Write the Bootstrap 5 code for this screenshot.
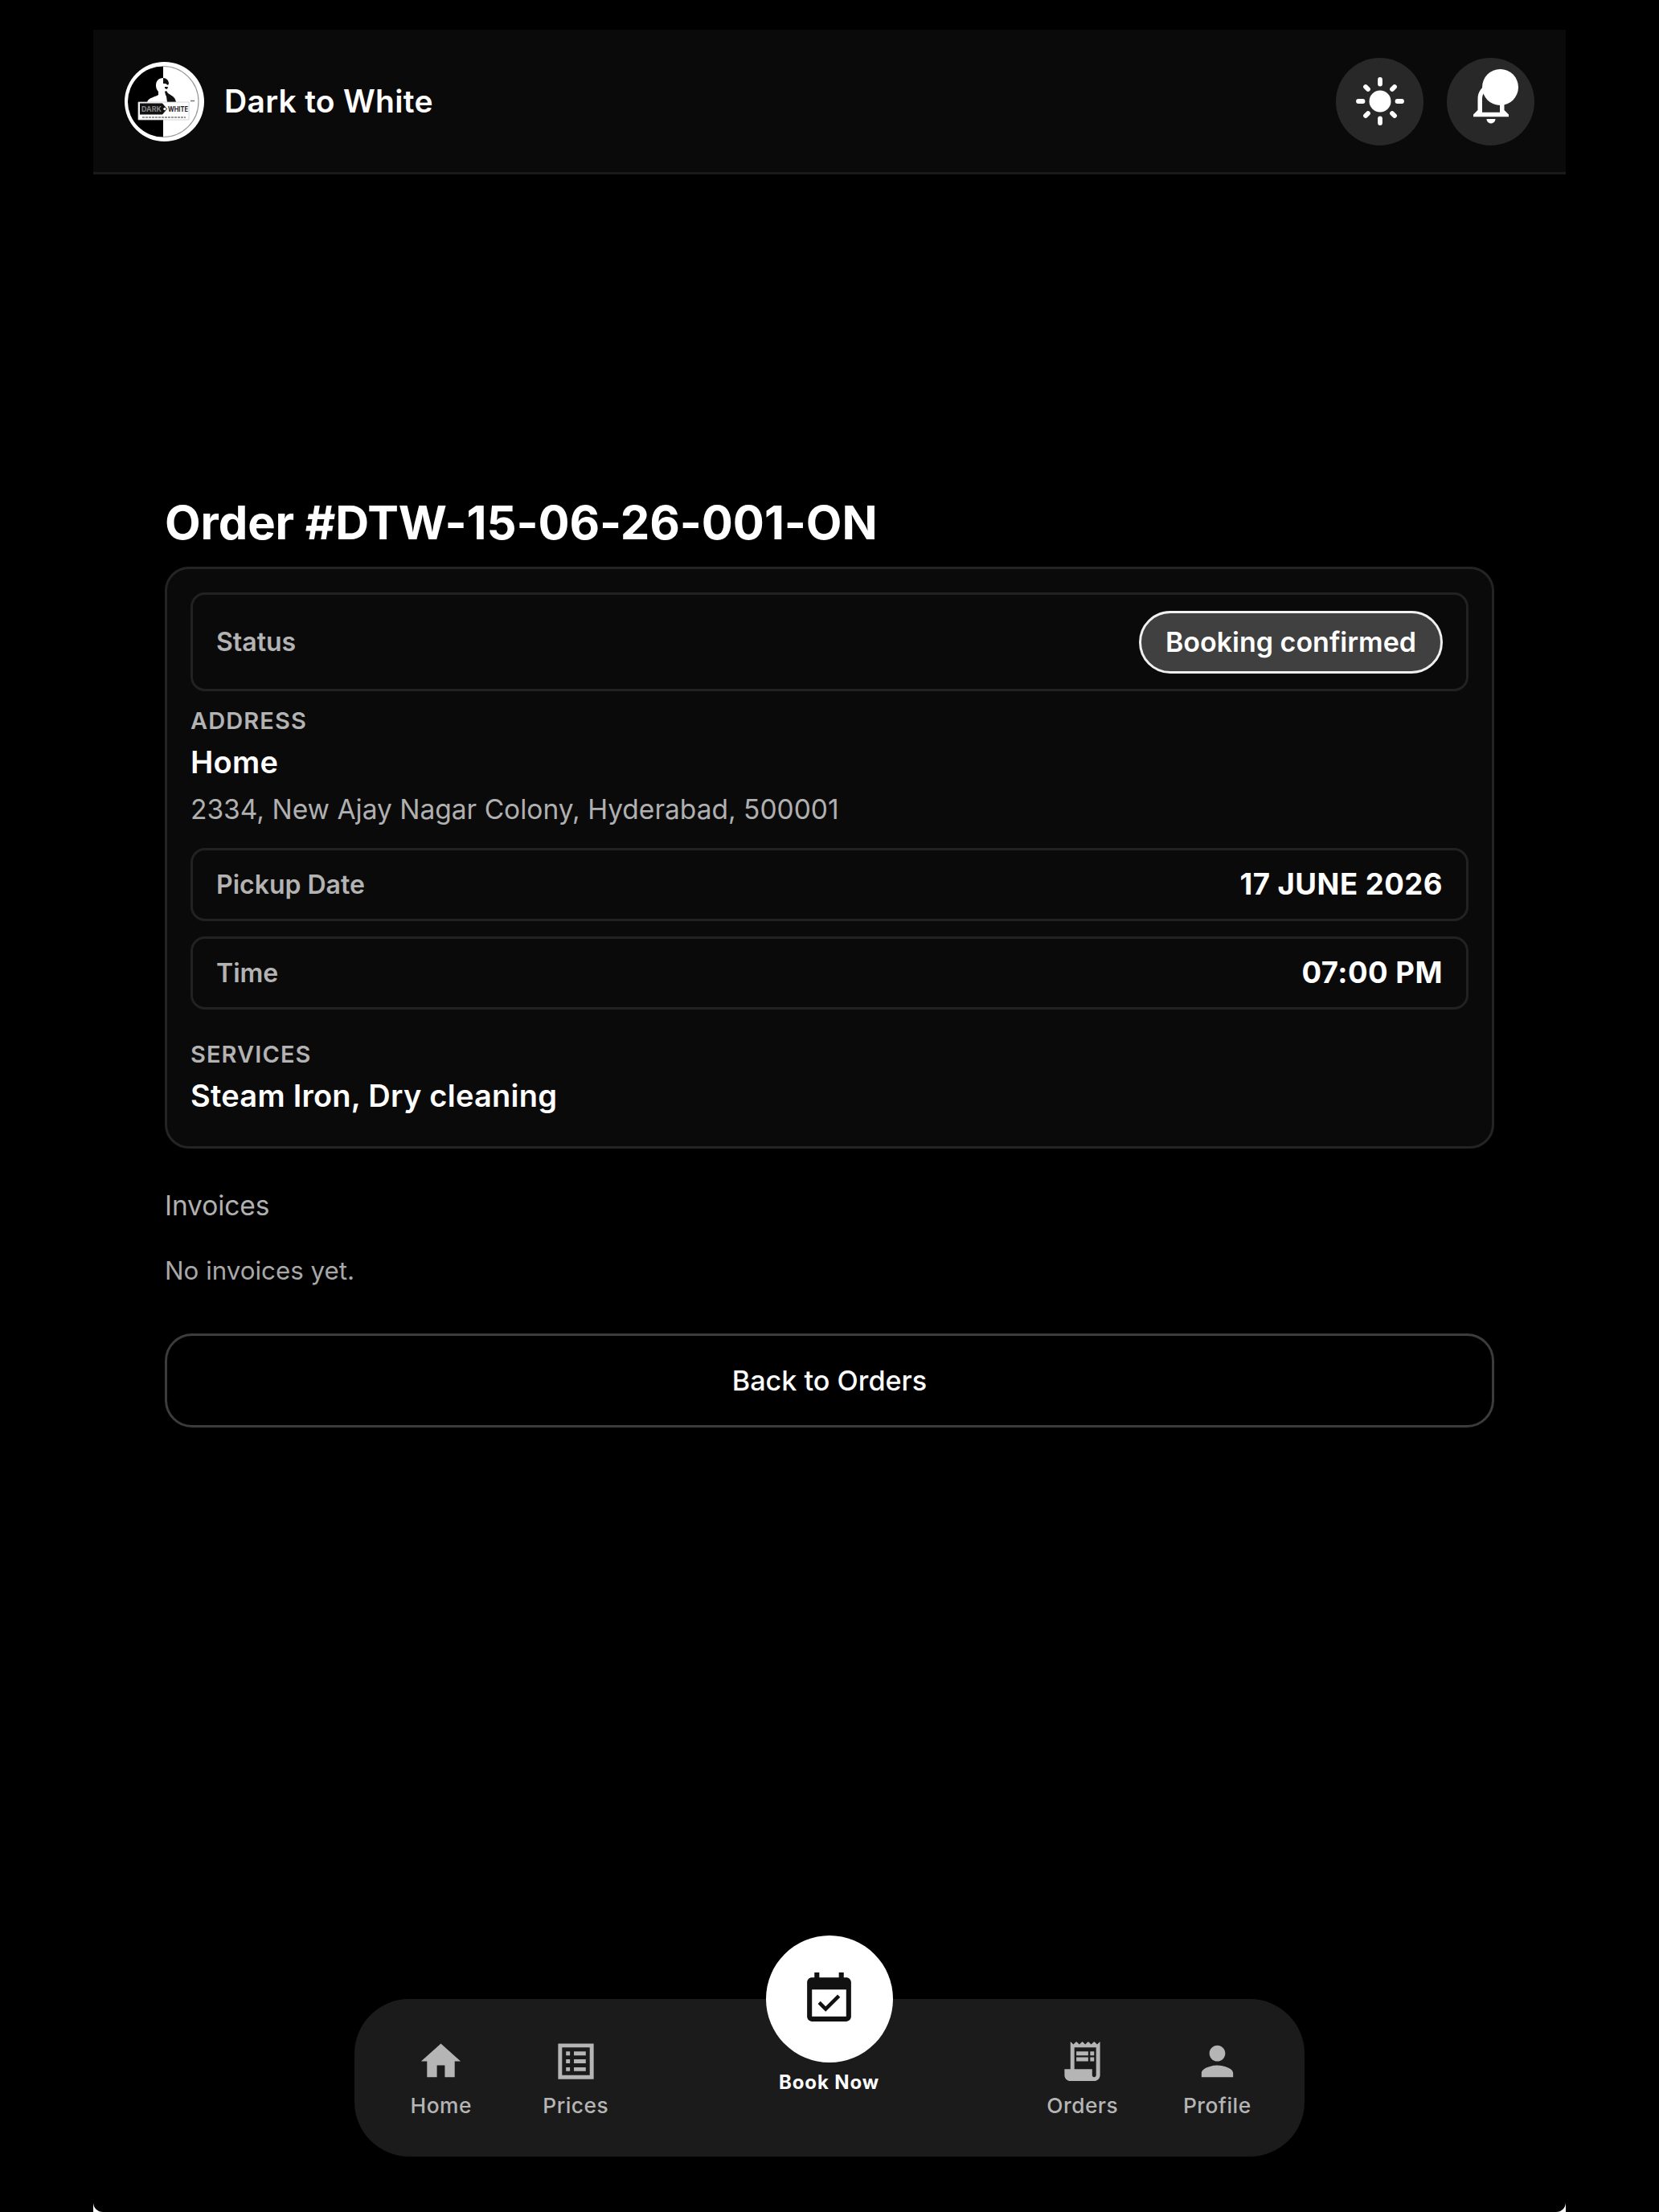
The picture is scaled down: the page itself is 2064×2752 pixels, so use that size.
<!DOCTYPE html>
<html lang="en">
<head>
  <meta charset="UTF-8">
  <meta name="viewport" content="width=device-width, initial-scale=1.0">
  <title>Dark to White - Order</title>
  <link href="https://cdn.jsdelivr.net/npm/bootstrap@5.3.0/dist/css/bootstrap.min.css" rel="stylesheet">
  <style>
    body {
      background-color: #000;
      color: #fff;
      font-family: Inter, 'Liberation Sans', sans-serif;
      padding-top: 37px;
    }
    .app-edge {
      width: 1832px;
      height: 2715px;
      background: #fff;
    }
    .app-shell {
      background: #000;
      border-radius: 0 0 12px 12px;
    }
    .top-bar {
      height: 180px;
      padding: 1px 39px 0;
      background: #0a0a0a;
      border-bottom: 3px solid #1a1a1a;
    }
    .brand-name {
      font-size: 39px;
      font-weight: 600;
      letter-spacing: .3px;
      margin-left: 25px;
    }
    .round-btn {
      width: 109px;
      height: 109px;
      background: #282828;
      border: 0;
    }
    .alert-dot {
      width: 45px;
      height: 45px;
      top: 14px;
      left: 44px;
    }
    .order-page {
      padding: 398px 89px 0;
    }
    .order-title {
      font-size: 58px;
      font-weight: 700;
      line-height: 70px;
      letter-spacing: -.1px;
      margin-bottom: 20px;
    }
    .order-card {
      background: #0a0a0a;
      border: 3px solid #242424;
      border-radius: 30px;
      height: 724px;
      padding: 29px;
    }
    .info-row {
      border: 3px solid #222;
      border-radius: 18px;
      height: 91px;
      padding: 0 29px;
    }
    .info-row.status-row {
      height: 123px;
    }
    .info-label {
      font-size: 32px;
      font-weight: 600;
      color: #b3b3b3;
    }
    .info-value {
      font-size: 36.5px;
      font-weight: 700;
      letter-spacing: .5px;
    }
    .status-pill {
      height: 78px;
      padding: 0 30px;
      font-size: 34px;
      font-weight: 600;
      background: #404040;
      border: 3px solid #f0f0f0;
    }
    .section-label {
      font-size: 29px;
      font-weight: 600;
      line-height: 40px;
      letter-spacing: 1.1px;
      color: #b3b3b3;
    }
    .section-value {
      font-size: 38px;
      font-weight: 600;
      line-height: 48px;
      letter-spacing: .25px;
      margin-top: 7px;
    }
    .address-line {
      font-size: 33.5px;
      line-height: 44px;
      margin: 13px 0 26px;
      color: #b0b0b0;
    }
    .invoices-title {
      font-size: 33.5px;
      font-weight: 400;
      line-height: 44px;
      letter-spacing: -.1px;
      margin: 49px 0 39px;
      color: #b0b0b0;
    }
    .invoices-empty {
      font-size: 31.3px;
      line-height: 40px;
      margin-bottom: 58px;
      color: #a8a8a8;
    }
    .back-btn {
      height: 117px;
      border: 3px solid #3c3c3c;
      border-radius: 34px;
      color: #fff;
      font-size: 34.2px;
      font-weight: 500;
    }
    .bottom-bar {
      width: 1182px;
      height: 196px;
      margin: auto auto 69px;
      padding: 0 25px 0 24px;
      background: #1b1b1b;
      border-radius: 68px;
    }
    .tab-item {
      width: 167.5px;
      padding-top: 48px;
      color: #b5b5b5;
      font-size: 26.3px;
      font-weight: 500;
      line-height: 32px;
      letter-spacing: .5px;
    }
    .tab-item svg {
      margin-bottom: 10px;
    }
    .book-item {
      margin-top: -79px;
      color: #fff;
      font-size: 24px;
      font-weight: 700;
      line-height: 30px;
      letter-spacing: .9px;
    }
    .book-circle {
      width: 158px;
      height: 158px;
      margin-bottom: 10px;
      color: #111;
    }
  </style>
</head>
<body>
  <div class="app-edge mx-auto">
    <div class="app-shell d-flex flex-column h-100">

      <header class="top-bar d-flex align-items-center flex-shrink-0">
        <svg width="99" height="99" viewBox="0 0 99 99">
          <circle cx="49.5" cy="49.5" r="49.5" fill="#fff"/>
          <path d="M48 5.5a44 44 0 0 0 0 88z" fill="#000"/>
          <path d="M48 5.5a44 44 0 0 1 0 88" fill="none" stroke="#999" stroke-width="1.2"/>
          <!-- portrait, light on the dark half and dark on the light half -->
          <path d="M48 20c-6 0-9 4-9 9 0 3 1 6 3 8v4c-4 3-12 3-14 9h20z" fill="#fff"/>
          <path d="M48 20c4 0 7 3 7 7l-1 2-3-2-3 0zM50 31h4l-1 3-3-1zM50 37l2-1 2 3c4 3 9 4 10 11H53l-1-7-1-2z" fill="#111"/>
          <path d="M17 50h63v22H17z" fill="#fff" stroke="#ccc" stroke-width=".8"/>
          <path d="M19 51.500h28l6 7-6 7H19z" fill="#111"/>
          <text x="21" y="62" font-size="9" font-weight="700" fill="#888" textLength="25" lengthAdjust="spacingAndGlyphs">DARK</text>
          <circle cx="50" cy="58.500" r="1.700" fill="#fff"/>
          <text x="54" y="62" font-size="9" font-weight="700" fill="#222" textLength="25" lengthAdjust="spacingAndGlyphs">WHITE</text>
          <path d="M22 69h54" stroke="#999" stroke-width="2" stroke-dasharray="3 1"/>
          <path d="M82 48.500h5" stroke="#777" stroke-width="1.500"/>
        </svg>
        <span class="brand-name">Dark to White</span>
        <div class="d-flex ms-auto" style="gap: 29px">
          <button class="round-btn rounded-circle d-flex align-items-center justify-content-center p-0" aria-label="Theme">
            <svg width="66" height="66" viewBox="-33 -33 66 66" stroke="#fff" stroke-width="5.800" stroke-linecap="round">
              <circle r="13.500" fill="#fff" stroke="none"/>
              <path d="M0-21.500v-5.500M0 21.500v5.500M-21.500 0h-5.500M21.500 0h5.500M-15-15l-3-3M15-15l3-3M-15 15l-3 3M15 15l3 3"/>
            </svg>
          </button>
          <button class="round-btn rounded-circle position-relative d-flex align-items-center justify-content-center p-0" aria-label="Notifications">
            <svg width="66" height="66" viewBox="0 0 24 24" fill="#fff">
              <path d="M12 22c1.100 0 2-.9 2-2h-4c0 1.100.9 2 2 2zm6-6v-5c0-3.070-1.630-5.640-4.500-6.320V4c0-.83-.67-1.500-1.500-1.500s-1.500.67-1.500 1.500v.68C7.640 5.360 6 7.920 6 11v5l-2 2v1h16v-1l-2-2zm-2 1H8v-6c0-2.480 1.510-4.500 4-4.500s4 2.020 4 4.500v6z"/>
            </svg>
            <span class="alert-dot position-absolute bg-white rounded-circle"></span>
          </button>
        </div>
      </header>

      <main class="order-page">
        <h1 class="order-title">Order #DTW-15-06-26-001-ON</h1>
        <section class="order-card">
          <div class="info-row status-row d-flex align-items-center justify-content-between">
            <span class="info-label">Status</span>
            <span class="status-pill rounded-pill d-flex align-items-center">Booking confirmed</span>
          </div>
          <div class="section-label" style="margin-top: 17px">ADDRESS</div>
          <div class="section-value">Home</div>
          <p class="address-line">2334, New Ajay Nagar Colony, Hyderabad, 500001</p>
          <div class="info-row d-flex align-items-center justify-content-between">
            <span class="info-label">Pickup Date</span>
            <span class="info-value">17 JUNE 2026</span>
          </div>
          <div class="info-row d-flex align-items-center justify-content-between" style="margin-top: 19px">
            <span class="info-label">Time</span>
            <span class="info-value">07:00 PM</span>
          </div>
          <div class="section-label" style="margin-top: 36px">SERVICES</div>
          <div class="section-value">Steam Iron, Dry cleaning</div>
        </section>

        <h2 class="invoices-title">Invoices</h2>
        <p class="invoices-empty">No invoices yet.</p>
        <a href="#" class="btn back-btn w-100 d-flex align-items-center justify-content-center">Back to Orders</a>
      </main>

      <nav class="bottom-bar d-flex">
        <div class="tab-item d-flex flex-column align-items-center">
          <svg width="59" height="59" viewBox="0 0 24 24" fill="currentColor"><path d="M10 20v-6h4v6h5v-8h3L12 3 2 12h3v8z"/></svg>
          Home
        </div>
        <div class="tab-item d-flex flex-column align-items-center">
          <svg width="59" height="59" viewBox="0 0 24 24" fill="currentColor"><path fill-rule="evenodd" d="M3 3h18v18H3zm2 2v14h14V5zM7 7h2v2H7zm4 0h6v2h-6zm-4 4h2v2H7zm4 0h6v2h-6zm-4 4h2v2H7zm4 0h6v2h-6z"/></svg>
          Prices
        </div>
        <div class="book-item d-flex flex-column align-items-center mx-auto">
          <div class="book-circle bg-white rounded-circle d-flex align-items-center justify-content-center">
            <svg width="73" height="73" viewBox="0 0 24 24" fill="currentColor"><path d="M16.530 11.060L15.470 10l-4.880 4.880-2.120-2.120-1.060 1.060L10.590 17l5.940-5.940zM19 3h-1V1h-2v2H8V1H6v2H5c-1.110 0-1.990.9-1.990 2L3 19c0 1.100.89 2 2 2h14c1.100 0 2-.9 2-2V5c0-1.100-.9-2-2-2zm0 16H5V8h14v11z"/></svg>
          </div>
          Book Now
        </div>
        <div class="tab-item d-flex flex-column align-items-center">
          <svg width="59" height="59" viewBox="0 0 24 24" fill="currentColor"><path d="M19.500 3.500L18 2l-1.500 1.500L15 2l-1.500 1.500L12 2l-1.500 1.500L9 2 7.500 3.500 6 2v14H3v3c0 1.660 1.340 3 3 3h12c1.660 0 3-1.340 3-3V2l-1.500 1.500zM19 19c0 .55-.45 1-1 1s-1-.45-1-1v-3H8V5h11v14z"/><path d="M9 7h6v2H9zM16 7h2v2h-2zM9 10h6v2H9zM16 10h2v2h-2z"/></svg>
          Orders
        </div>
        <div class="tab-item d-flex flex-column align-items-center">
          <svg width="61" height="59" viewBox="0 0 24 24" fill="currentColor"><path d="M12 12c2.210 0 4-1.790 4-4s-1.790-4-4-4-4 1.790-4 4 1.790 4 4 4zm0 2c-2.670 0-8 1.340-8 4v2h16v-2c0-2.660-5.330-4-8-4z"/></svg>
          Profile
        </div>
      </nav>

    </div>
  </div>
  <script src="https://cdn.jsdelivr.net/npm/bootstrap@5.3.0/dist/js/bootstrap.bundle.min.js"></script>
</body>
</html>
